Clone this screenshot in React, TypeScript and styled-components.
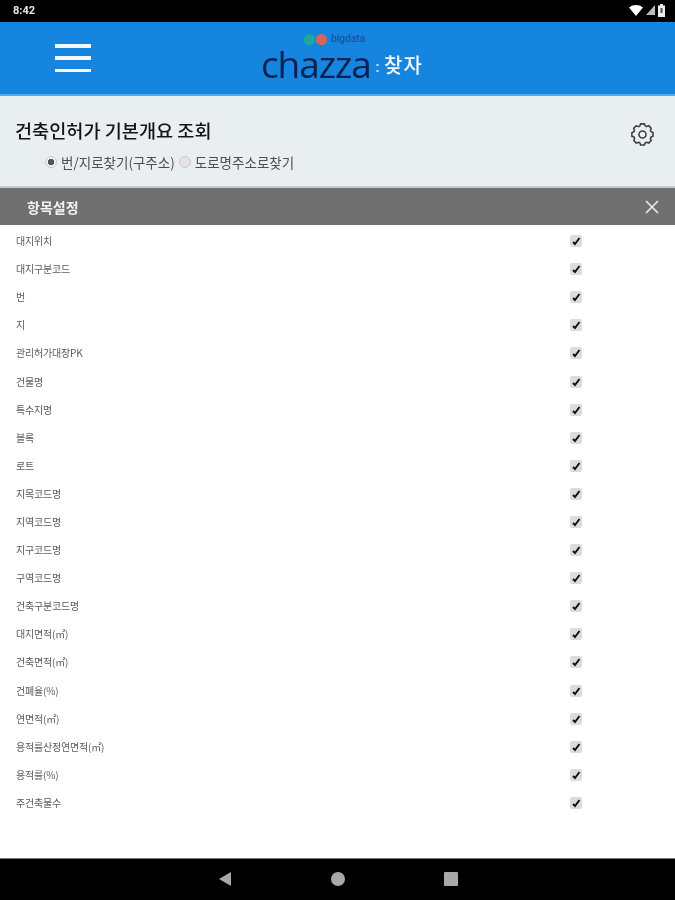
import React from "react";
import styled, { createGlobalStyle } from "styled-components";

const Global = createGlobalStyle`
  html, body { margin: 0; padding: 0; background: #fff; }
  * { box-sizing: border-box; }
  body { font-family: "Noto Sans CJK KR", "Liberation Sans", sans-serif; }
`;

const Page = styled.div`
  width: 675px;
  height: 900px;
  display: flex;
  flex-direction: column;
  overflow: hidden;
`;

const StatusBar = styled.div`
  height: 22px;
  background: #000;
  display: flex;
  align-items: center;
  justify-content: space-between;
  padding: 0 10px 2px 13px;
  color: #e8e8e8;
  font: 700 11px "Roboto", sans-serif;
  filter: blur(0.4px);
  flex: none;
`;

const StatusIcons = styled.div`
  display: flex;
  align-items: center;
  gap: 3px;
`;

const AppBar = styled.header`
  height: 74px;
  flex: none;
  background: #1585e0;
  border-bottom: 2px solid #5ba9ec;
  display: flex;
  align-items: center;
  padding-left: 55px;
`;

const Burger = styled.div`
  width: 36px;
  height: 28px;
  display: flex;
  flex-direction: column;
  justify-content: space-between;
  & > span {
    display: block;
    height: 3.5px;
    background: #f4f8fc;
  }
`;

const Logo = styled.div`
  margin-left: 170px;
  margin-top: 0;
  width: 170px;
  height: 50px;
  position: relative;
  display: flex;
  align-items: flex-end;
  filter: blur(0.4px);
`;

const LogoWord = styled.span`
  font: 500 37px/32px "Open Sans", "Liberation Sans", sans-serif;
  letter-spacing: -1.1px;
  color: #0b2150;
  width: 110px;
  white-space: nowrap;
  margin-bottom: 3px;
`;

const LogoColon = styled.span`
  color: #c5dcf2;
  font: 700 15px/26px "Liberation Sans", sans-serif;
  width: 13px;
  text-align: center;
  margin-bottom: 3px;
`;

const LogoKorean = styled.span`
  color: #f2f8fd;
  font: 500 20px/30px "Noto Sans CJK KR", sans-serif;
  letter-spacing: 1px;
  white-space: nowrap;
  margin-bottom: 3px;
`;

const LogoTag = styled.div`
  position: absolute;
  left: 43px;
  top: 0;
  display: flex;
  align-items: center;
  gap: 1px;
  color: #14549f;
  font: 500 10.2px/12px "Roboto", sans-serif;
`;

const TagWord = styled.span`
  margin-left: 3px;
`;

const Dot = styled.i<{ $c: string }>`
  width: 11px;
  height: 11px;
  border-radius: 50%;
  background: ${(p) => p.$c};
`;

const SearchPanel = styled.section`
  height: 92px;
  flex: none;
  background: #e9eef1;
  position: relative;
  padding: 21px 0 0 15px;
  border-bottom: 2px solid #c9cccd;
`;

const Title = styled.h1`
  margin: 0;
  font: 500 18.6px/26px "Noto Sans CJK KR", sans-serif;
  color: #141414;
  filter: blur(0.35px);
`;

const RadioRow = styled.div`
  display: flex;
  align-items: center;
  margin: 9px 0 0 30px;
  font: 400 13.5px/20px "Noto Sans CJK KR", sans-serif;
  color: #4f4f4f;
  filter: blur(0.4px);
`;

const Radio = styled.span<{ $on?: boolean }>`
  width: 12px;
  height: 12px;
  border-radius: 50%;
  border: 1px solid #c8c8c8;
  background: ${(p) =>
    p.$on
      ? "radial-gradient(circle, #555 0 3px, #f0f0f0 3.5px)"
      : "#e4e4e4"};
  margin-right: 4px;
  flex: none;
`;

const RadioLabel = styled.span`
  margin-right: 4px;
  white-space: nowrap;
`;

const GearWrap = styled.div`
  position: absolute;
  right: 20px;
  top: 26px;
  width: 25px;
  height: 25px;
  color: #3a3d40;
  filter: blur(0.3px);
`;

const SheetHeader = styled.div`
  height: 37px;
  background: #707070;
  display: flex;
  align-items: center;
  justify-content: space-between;
  padding: 0 15px 0 27px;
  color: #f2f2f2;
  font: 700 14px "Noto Sans CJK KR", sans-serif;
  flex: none;
`;

const HeaderTitle = styled.span`
  filter: blur(0.35px);
`;

const List = styled.div`
  flex: 1;
  background: #fff;
  padding-top: 2px;
`;

const Row = styled.div`
  height: 28.1px;
  display: flex;
  align-items: center;
  justify-content: space-between;
  padding: 0 93px 0 16px;
`;

const RowLabel = styled.span`
  font: 400 10px/14px "Noto Sans CJK KR", sans-serif;
  color: #5c5c5c;
  letter-spacing: -0.2px;
  filter: blur(0.5px);
`;

const Check = styled.span`
  width: 12px;
  height: 12px;
  background: #dcdcdc;
  border-radius: 2px;
  display: flex;
  align-items: center;
  justify-content: center;
  filter: blur(0.3px);
`;

const NavBar = styled.nav`
  height: 42px;
  flex: none;
  background: #000;
  border-top: 1px solid #777;
  display: flex;
  align-items: center;
  justify-content: center;
  gap: 99px;
  padding-bottom: 1px;
  & > svg { display: block; }
`;

const labels = [
  "대지위치", "대지구분코드", "번", "지", "관리허가대장PK", "건물명", "특수지명",
  "블록", "로트", "지목코드명", "지역코드명", "지구코드명", "구역코드명", "건축구분코드명",
  "대지면적(㎡)", "건축면적(㎡)", "건폐율(%)", "연면적(㎡)", "용적률산정연면적(㎡)",
  "용적률(%)", "주건축물수",
];

export default function App() {
  return (
    <Page>
      <Global />
      <StatusBar>
        <span>8:42</span>
        <StatusIcons>
          <svg width="14" height="11" viewBox="0 0 14 11"><path d="M0 2.5C4 -0.8 10 -0.8 14 2.5L7 11Z" fill="#fff" /></svg>
          <svg width="9" height="10" viewBox="0 0 9 10"><path d="M9 0V10H0Z" fill="#bbb" /></svg>
          <svg width="7" height="13" viewBox="0 0 7 13"><path d="M2 0H5V1.5H7V13H0V1.5H2Z" fill="#eee" /><rect x="2.5" y="4" width="2" height="5" fill="#555" /></svg>
        </StatusIcons>
      </StatusBar>
      <AppBar>
        <Burger><span /><span /><span /></Burger>
        <Logo>
          <LogoTag>
            <Dot $c="#1fa89a" /><Dot $c="#e2605c" />
            <TagWord>bigdata</TagWord>
          </LogoTag>
          <LogoWord>chazza</LogoWord>
          <LogoColon>:</LogoColon>
          <LogoKorean>찾자</LogoKorean>
        </Logo>
      </AppBar>
      <SearchPanel>
        <Title>건축인허가 기본개요 조회</Title>
        <RadioRow>
          <Radio $on /><RadioLabel>번/지로찾기(구주소)</RadioLabel>
          <Radio /><RadioLabel>도로명주소로찾기</RadioLabel>
        </RadioRow>
        <GearWrap>
          <svg width="25" height="25" viewBox="0 0 24 24" fill="none" stroke="currentColor" strokeWidth="1.5" strokeLinejoin="round">
            <path d="M9.7 3.2 10.2 1.8h3.6l.5 1.4a1.6 1.6 0 0 0 2.2.9l1.4-.6 2.5 2.5-.6 1.4a1.6 1.6 0 0 0 .9 2.2l1.4.5v3.6l-1.4.5a1.6 1.6 0 0 0-.9 2.2l.6 1.4-2.5 2.5-1.4-.6a1.6 1.6 0 0 0-2.2.9l-.5 1.4h-3.6l-.5-1.4a1.6 1.6 0 0 0-2.2-.9l-1.4.6-2.5-2.5.6-1.4a1.6 1.6 0 0 0-.9-2.2L1.8 13.8v-3.6l1.4-.5a1.6 1.6 0 0 0 .9-2.2l-.6-1.4 2.5-2.5 1.4.6a1.6 1.6 0 0 0 2.3-1Z" />
            <circle cx="12" cy="12" r="3.4" />
          </svg>
        </GearWrap>
      </SearchPanel>
      <SheetHeader>
        <HeaderTitle>항목설정</HeaderTitle>
        <svg width="16" height="16" viewBox="0 0 16 16" stroke="#f0f0f0" strokeWidth="1.5"><path d="M2 2 14 14M14 2 2 14" /></svg>
      </SheetHeader>
      <List>
        {labels.map((l) => (
          <Row key={l}>
            <RowLabel>{l}</RowLabel>
            <Check>
              <svg width="10" height="10" viewBox="0 0 10 10" fill="none" stroke="#111" strokeWidth="2"><path d="M2 6 4 8 8.5 2" /></svg>
            </Check>
          </Row>
        ))}
      </List>
      <NavBar>
        <svg width="14" height="16" viewBox="0 0 14 16"><path d="M13 1V15L1 8Z" fill="#a8a8a8" /></svg>
        <svg width="14" height="14" viewBox="0 0 14 14"><circle cx="7" cy="7" r="7" fill="#a8a8a8" /></svg>
        <svg width="14" height="14" viewBox="0 0 14 14"><rect width="14" height="14" rx="1" fill="#a8a8a8" /></svg>
      </NavBar>
    </Page>
  );
}
